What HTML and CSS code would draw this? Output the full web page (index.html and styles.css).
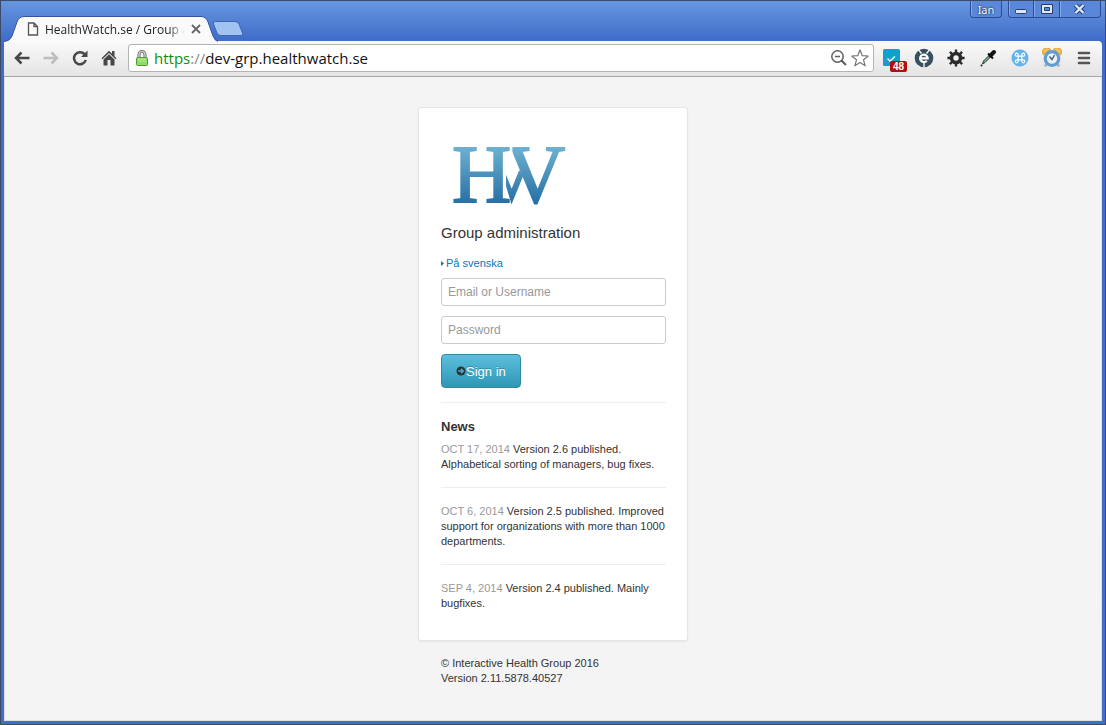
FILE: index.html
```html
<!DOCTYPE html>
<html lang="en">
<head>
<meta charset="utf-8">
<title>HealthWatch.se / Group administration</title>
<link rel="stylesheet" href="styles.css">
</head>
<body>
<div class="window">
  <header class="titlebar">
    <div class="tab">
      <svg class="tab-shape" width="214" height="27" viewBox="0 0 214 27"><path d="M0 27V25.500Q6 25 8 20L13 6Q15 .5 20 .5H197Q202 .5 204 6L209 20Q211 25 214 25.500V27Z" fill="#fafafa"/><path d="M0 25.500Q6 25 8 20L13 6Q15 .5 20 .5H197Q202 .5 204 6L209 20Q211 25 214 25.500" fill="none" stroke="#31559f"/></svg>
      <svg class="tab-icon" width="12" height="14" viewBox="0 0 12 14" fill="none" stroke="#555" stroke-width="1.300"><path d="M1.500 1H7L10.500 4.500V13H1.500ZM7 1V4.500H10.500"/></svg>
      <span class="tab-title">HealthWatch.se / Group ad</span>
      <button class="plain" aria-label="Close tab"><svg width="10" height="10" viewBox="0 0 10 10" stroke="#666" stroke-width="1.800"><path d="M1 1L9 9M9 1L1 9"/></svg></button>
    </div>
    <button class="plain new-tab" aria-label="New tab"><svg width="32" height="17" viewBox="0 0 32 17"><path d="M3.500 1.500H23Q26 1.500 27 4L30.500 13Q31.500 15.500 29 15.500H9Q6 15.500 5 13L1.500 4Q.5 1.500 3.500 1.500Z" fill="#a0c3f2" stroke="#3d66b4"/></svg></button>
    <div class="caption">
      <button class="user">Ian</button>
      <div class="controls">
        <button class="ctl" aria-label="Minimize"><svg width="14" height="12" viewBox="0 0 14 12"><rect x="1.500" y="6.500" width="11" height="4" rx="1" fill="#dce7fa" stroke="#263f73"/></svg></button>
        <button class="ctl" aria-label="Restore"><svg width="14" height="12" viewBox="0 0 14 12"><path d="M1.500 1.500H12.500V10.500H1.500ZM4.500 4.500V7.500H9.500V4.500Z" fill="#dce7fa" fill-rule="evenodd" stroke="#263f73"/></svg></button>
        <button class="ctl wide" aria-label="Close"><svg width="14" height="12" viewBox="0 0 14 12" fill="none"><path d="M2.500 2L10.500 10M10.500 2L2.500 10" stroke="#263f73" stroke-width="4.400"/><path d="M2.500 2L10.500 10M10.500 2L2.500 10" stroke="#dce7fa" stroke-width="2.400"/></svg></button>
      </div>
    </div>
  </header>
  <nav class="toolbar">
    <div class="nav-buttons">
      <button class="plain" aria-label="Back"><svg width="18" height="16" viewBox="0 0 18 16" fill="none" stroke="#484848" stroke-width="2.500"><path d="M8.500 2.500L3 8L8.500 13.500M3 8H16.500"/></svg></button>
      <button class="plain" aria-label="Forward"><svg width="18" height="16" viewBox="0 0 18 16" fill="none" stroke="#bdbdbd" stroke-width="2.500"><path d="M9.500 2.500L15 8L9.500 13.500M15 8H1.500"/></svg></button>
      <button class="plain" aria-label="Reload"><svg width="18" height="16" viewBox="0 0 18 16"><path d="M13.500 4.200A6 6 0 1 0 14.800 10" fill="none" stroke="#484848" stroke-width="2.500"/><path d="M16.500 .5V7H10Z" fill="#484848"/></svg></button>
      <button class="plain" aria-label="Home"><svg width="18" height="16" viewBox="0 0 18 16" fill="#484848"><path d="M9 .8L1.500 8.300L2.500 9.300L9 3L15.500 9.300L16.500 8.300L14.500 6.200V1H12V3.800Z"/><path d="M9 4.200L3.500 9.500V15.500H7.500V10H10.500V15.500H14.500V9.500Z"/></svg></button>
    </div>
    <div class="omnibox">
      <svg width="14" height="17" viewBox="0 0 14 17"><path d="M4 8V4.500A3 3 0 0 1 10 4.500V8" fill="none" stroke="#777" stroke-width="3.200"/><path d="M4 8V4.500A3 3 0 0 1 10 4.500V8" fill="none" stroke="#d8d8d8" stroke-width="1.200"/><rect x="1.500" y="7.500" width="11" height="8" rx="1" fill="#8edb65" stroke="#55983b"/><path d="M3 9H11M3 11H11" stroke="#b4ec94"/></svg>
      <div class="url"><span class="secure">https</span><span class="slashes">://</span>dev-grp.healthwatch.se</div>
      <button class="plain" aria-label="Zoom"><svg width="18" height="18" viewBox="0 0 18 18" fill="none" stroke="#606060"><circle cx="7.500" cy="7.500" r="5.700" stroke-width="1.500"/><path d="M5 7.500H10" stroke-width="1.500"/><path d="M11.500 11.500L16 16" stroke-width="2.200"/></svg></button>
      <button class="plain" aria-label="Bookmark"><svg width="20" height="20" viewBox="0 0 20 20" fill="#fff" stroke="#777" stroke-width="1.200" stroke-linejoin="round"><path d="M10 1.800L12.200 7.700L18.300 8L13.500 11.800L15.200 17.800L10 14.400L4.800 17.800L6.500 11.800L1.700 8L7.800 7.700Z"/></svg></button>
    </div>
    <div class="extensions">
      <button class="plain ext" aria-label="Tasks, 48"><svg width="18" height="18" viewBox="0 0 18 18"><rect width="17" height="17" rx="1.500" fill="#129fd0"/><path d="M4.500 9.500L7 12L12 7.500" stroke="#fff" stroke-width="1.300" fill="none"/></svg><span class="badge">48</span></button>
      <button class="plain ext" aria-label="Ghost"><svg width="20" height="20" viewBox="0 0 20 20"><circle cx="10" cy="10" r="9.300" fill="#37515f"/><path d="M6.500 10.300H13.700A3.800 3.800 0 1 0 12.800 12.800" fill="none" stroke="#fff" stroke-width="2.200"/><path d="M4.500 1.800L7.500 5.500M15.500 1.800L12.500 5.500M10 14V19.500" stroke="#fff" stroke-width="1.300"/></svg></button>
      <button class="plain ext" aria-label="Settings"><svg width="18" height="18" viewBox="0 0 18 18"><circle cx="9" cy="9" r="4.500" fill="none" stroke="#2b2b2b" stroke-width="3.600"/><path d="M9 .4V3M9 15V17.600M.4 9H3M15 9H17.600M2.900 2.900L4.800 4.800M13.200 13.200L15.100 15.100M2.900 15.100L4.800 13.200M13.200 4.800L15.100 2.900" stroke="#2b2b2b" stroke-width="2.400"/></svg></button>
      <button class="plain ext" aria-label="Colour picker"><svg width="18" height="18" viewBox="0 0 18 18"><path d="M3.500 15L4.500 12L10.500 6L12 7.500L6 13.500Z" fill="#7eab90" stroke="#273b30"/><path d="M9 4.500L14 9.500" stroke="#111" stroke-width="2"/><path d="M11.500 6.500L15 3" stroke="#111" stroke-width="4" stroke-linecap="round"/><circle cx="2.500" cy="16.500" r="1" fill="#222"/></svg></button>
      <button class="plain ext" aria-label="Shortcuts"><svg width="18" height="18" viewBox="0 0 18 18"><circle cx="9" cy="9" r="8.500" fill="#62b2ee"/><path d="M7.200 7.200H10.800V10.800H7.200ZM7.200 7.200H5.700A1.500 1.500 0 1 1 7.200 5.700ZM10.800 7.200V5.700A1.500 1.500 0 1 1 12.300 7.200ZM10.800 10.800H12.300A1.500 1.500 0 1 1 10.800 12.300ZM7.200 10.800V12.300A1.500 1.500 0 1 1 5.700 10.800Z" fill="none" stroke="#fff" stroke-width="1.200"/></svg></button>
      <button class="plain ext" aria-label="Alarm"><svg width="20" height="20" viewBox="0 0 20 20"><path d="M4.500 16L3 18.500M15.500 16L17 18.500" stroke="#b5b5b5" stroke-width="3"/><path d="M1.500 6.500A4 4 0 0 1 8 1.500ZM18.500 6.500A4 4 0 0 0 12 1.500Z" fill="#f7c657" stroke="#e3ab45" stroke-width="1.500"/><circle cx="10" cy="10.500" r="6.800" fill="#eaf2f8" stroke="#619dd4" stroke-width="3.200"/><path d="M7.500 8.500L10 11.500L12.500 7" fill="none" stroke="#4a5a70" stroke-width="1.400"/></svg></button>
      <button class="plain ext" aria-label="Menu"><svg width="14" height="14" viewBox="0 0 14 14" stroke="#555" stroke-width="2.600" stroke-linecap="round"><path d="M2 2H12M2 7H12M2 12H12"/></svg></button>
    </div>
  </nav>
  <main class="page">
    <section class="card">
      <svg class="logo" width="130" height="62" viewBox="0 0 130 62" role="img" aria-label="HW">
        <defs>
          <linearGradient id="blue" gradientUnits="userSpaceOnUse" x1="0" y1="2" x2="0" y2="60"><stop offset="0" stop-color="#6fb2d1"/><stop offset="1" stop-color="#266fa4"/></linearGradient>
          <clipPath id="inner-arm"><path d="M65 14L80 28H96V62H71L65 42Z"/></clipPath>
          <clipPath id="outer-arm"><path d="M71.500 0H130V62H71.500Z"/></clipPath>
        </defs>
        <g fill="url(#blue)" stroke="url(#blue)" stroke-width="1.800" class="logo-text">
          <text x="11" y="58">H</text>
          <text x="39" y="58" clip-path="url(#inner-arm)">V</text>
          <text x="65" y="58" clip-path="url(#outer-arm)">V</text>
        </g>
      </svg>
      <h1 class="heading">Group administration</h1>
      <a class="language" href="#"><svg width="5" height="7" viewBox="0 0 5 7"><path d="M0 1L3 3.500L0 6Z" fill="#0878bd"/></svg>På svenska</a>
      <form class="login">
        <input class="field" type="text" aria-label="Email or Username" placeholder="Email or Username">
        <input class="field" type="password" aria-label="Password" placeholder="Password">
        <button class="sign-in" type="button"><svg width="10" height="10" viewBox="0 0 10 10"><circle cx="5" cy="5" r="4.500" fill="#26343a"/><path d="M2.200 5H7M5 2.800L7.300 5L5 7.200" fill="none" stroke="#4cb0cf" stroke-width="1.300"/></svg>Sign in</button>
      </form>
      <h2 class="news-heading">News</h2>
      <article class="news"><time>OCT 17, 2014</time> Version 2.6 published. Alphabetical sorting of managers, bug fixes.</article>
      <article class="news"><time>OCT 6, 2014</time> Version 2.5 published. Improved support for organizations with more than 1000 departments.</article>
      <article class="news"><time>SEP 4, 2014</time> Version 2.4 published. Mainly bugfixes.</article>
    </section>
    <footer class="footer">© Interactive Health Group 2016<br>Version 2.11.5878.40527</footer>
  </main>
</div>
</body>
</html>
```
FILE: styles.css
```css
* { box-sizing: border-box; }
body {
  margin: 0;
  font-family: "Liberation Sans", Arial, sans-serif;
  font-size: 11px;
  line-height: 15px;
  color: #333;
  background: #3f6fc9;
}
.window {
  display: flex;
  flex-direction: column;
  min-height: 100vh;
  padding: 0 3px 3px;
  border: 1px solid #3a4a68;
  background: linear-gradient(#6796e0, #3f6cc7 40px, #3f6fc9);
}
svg { display: block; flex: none; }
.plain {
  display: flex;
  align-items: center;
  justify-content: center;
  padding: 0;
  border: 0;
  background: none;
}
.titlebar { display: flex; align-items: flex-start; height: 40px; }
.tab {
  position: relative;
  z-index: 1;
  display: flex;
  align-items: center;
  width: 214px;
  height: 25px;
  margin-top: 15px;
  padding: 1px 17px 0 23px;
}
.tab-shape { position: absolute; left: 0; top: 0; }
.tab-icon, .tab-title, .tab .plain { position: relative; }
.tab-title {
  flex: 1;
  margin: 0 6px;
  overflow: hidden;
  white-space: nowrap;
  font-family: "Open Sans", sans-serif;
  font-size: 12px;
  color: #222;
  -webkit-mask-image: linear-gradient(90deg, #000 88%, transparent);
  mask-image: linear-gradient(90deg, #000 88%, transparent);
}
.new-tab { margin: 19px 0 0 -6px; }
.caption { display: flex; gap: 6px; margin-left: auto; padding-right: 1px; }
.user, .ctl {
  height: 17px;
  padding: 0;
  border: 1px solid #294c95;
  border-top: 0;
  color: #fff;
  background: #5a87d8;
  box-shadow: inset 1px 0 #84a9e8;
}
.user {
  width: 32px;
  border-radius: 0 0 4px 4px;
  font: 11px "Noto Sans", sans-serif;
  text-shadow: 0 0 2px #132b5e, 0 0 1px #132b5e;
}
.controls { display: flex; }
.ctl { display: flex; align-items: center; justify-content: center; width: 26px; }
.ctl + .ctl { border-left: 0; }
.ctl:first-child { border-bottom-left-radius: 4px; }
.wide { width: 41px; border-bottom-right-radius: 4px; }
.toolbar {
  display: flex;
  align-items: center;
  height: 36px;
  padding: 0 8px 1px 9px;
  border-bottom: 1px solid #a8a8a8;
  border-radius: 3px 4px 0 0;
  background: linear-gradient(#fafafa, #e4e4e4);
}
.nav-buttons { display: flex; gap: 11px; margin-right: 10px; }
.omnibox {
  display: flex;
  flex: 1;
  align-items: center;
  height: 28px;
  padding: 0 3px 0 6px;
  border: 1px solid #b4b4b4;
  border-radius: 3px;
  background: #fff;
}
.url {
  flex: 1;
  margin-left: 5px;
  font-family: "Open Sans", sans-serif;
  font-size: 15px;
  line-height: 20px;
  color: #111;
}
.secure { color: #0b8f0b; }
.slashes { color: #888; }
.omnibox .plain + .plain { margin-left: 2px; }
.extensions { display: flex; gap: 12px; margin-left: 8px; }
.ext { position: relative; width: 20px; height: 20px; }
.badge {
  position: absolute;
  left: 8px;
  top: 13px;
  padding: 0 3px;
  border-radius: 2px;
  font: bold 10px/11px "Liberation Sans", sans-serif;
  color: #fff;
  background: #b30d0d;
}
.page {
  flex: 1;
  padding: 30px 16px;
  border: 1px solid #e0dfdb;
  border-top: 0;
  background: #f4f4f4;
}
.card, .footer { width: 100%; max-width: 270px; margin: 0 auto; }
.card {
  padding: 36px 21px 14px 22px;
  border: 1px solid #e5e5e5;
  border-radius: 3px;
  background: #fff;
  box-shadow: 0 1px 2px rgba(0, 0, 0, .05);
}
.logo-text { font-family: "Liberation Serif", serif; font-size: 82px; }
.heading { margin: 17px 0 0; font-size: 15px; font-weight: 400; line-height: 20px; }
.language {
  display: flex;
  align-items: center;
  margin: 13px 0 7px;
  color: #0878bd;
  text-decoration: none;
}
.login {
  display: flex;
  flex-direction: column;
  align-items: flex-start;
  gap: 10px;
  padding-bottom: 14px;
  border-bottom: 1px solid #eee;
}
.field {
  width: 100%;
  height: 28px;
  padding: 4px 6px;
  border: 1px solid #ccc;
  border-radius: 3px;
  font: 12px/18px "Liberation Sans", Arial, sans-serif;
  color: #555;
  background: #fff;
}
.field::placeholder { color: #999; opacity: 1; }
.sign-in {
  display: flex;
  align-items: center;
  height: 34px;
  padding: 0 14px;
  border: 1px solid #3389a2;
  border-radius: 4px;
  font: 13px "Liberation Sans", Arial, sans-serif;
  color: #fff;
  background: linear-gradient(#5bc0de, #2f96b4);
  text-shadow: 0 -1px rgba(0, 0, 0, .25);
}
.news-heading { margin: 15px 0 0; font-size: 13px; line-height: 18px; }
.news { padding: 16px 0 15px; border-bottom: 1px solid #eee; }
.news-heading + .news { padding-top: 6px; }
.news:last-child { border-bottom: 0; }
.news time { color: #999; }
.footer { padding: 0 22px 0 23px; margin-top: 15px; }
```
